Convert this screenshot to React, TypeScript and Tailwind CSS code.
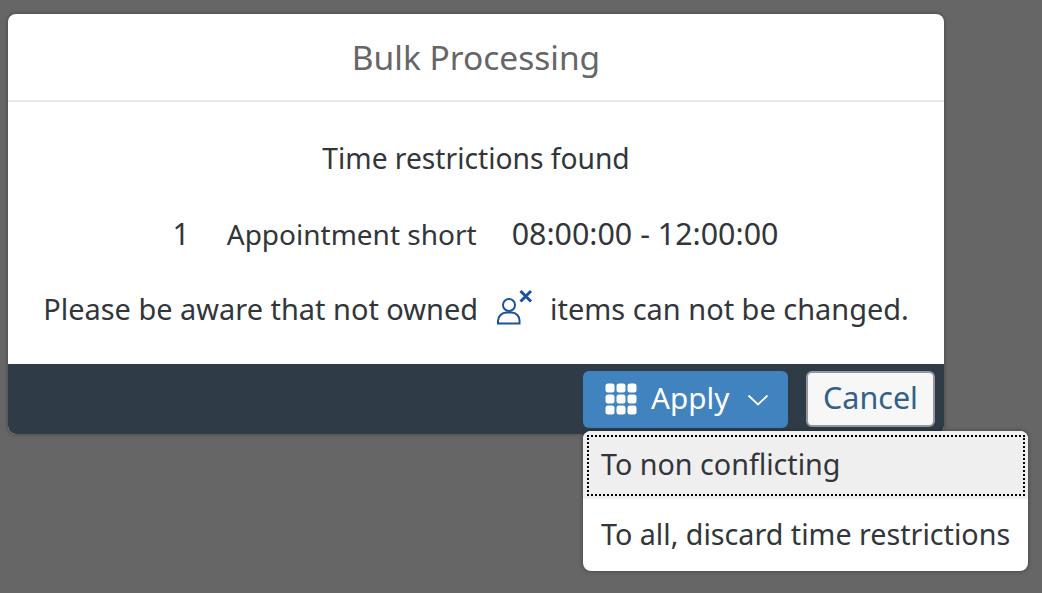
import React from "react"

const font = "font-['Noto_Sans','Open_Sans',sans-serif]"

const GridIcon = () => (
  <svg width="32" height="32" viewBox="0 0 32 32" fill="white">
    {[0.5, 11.5, 22.5].flatMap((y) =>
      [0.5, 11.5, 22.5].map((x) => <rect key={`${x}-${y}`} x={x} y={y} width="9" height="9" rx="2.5" />)
    )}
  </svg>
)

const NotOwnedIcon = () => (
  <svg width="38" height="38" viewBox="0 0 38 38" fill="none" stroke="#1d4f9c" className="ml-[18px] mr-[16px] -mt-[2px]">
    <circle cx="13" cy="16" r="6" strokeWidth="2" />
    <path d="M2 34.5v-2.5a8.5 8.5 0 0 1 8.5-8.5h5a8 8 0 0 1 8 8.5v2.5z" strokeWidth="2" />
    <path d="M24.5 2l10.5 10.5M35 2L24.5 12.5" strokeWidth="3" />
  </svg>
)

const Chevron = () => (
  <svg width="22" height="12" viewBox="0 0 22 12" fill="none" stroke="white" strokeWidth="1.8">
    <path d="M1.5 1.5L11 10.5L20.5 1.5" />
  </svg>
)

export default function App() {
  return (
    <div className={`relative h-[593px] w-[1042px] overflow-hidden bg-[#666666] pt-[14px] pl-2 ${font}`}>
      <div className="w-[936px] h-[420px] rounded-lg overflow-hidden bg-white flex flex-col shadow-[0_0_4px_rgba(0,0,0,0.35)]">
        <div className="h-[88px] shrink-0 border-b-2 border-[#e9e9e9] flex items-center justify-center text-[33.5px] text-[#666666]">
          <span className="mt-[1px]">Bulk Processing</span>
        </div>
        <div className="flex-1 flex flex-col items-center text-[28px] text-[#32363a]">
          <div className="mt-[36px] h-[40px] leading-[40px] text-[28.2px]">Time restrictions found</div>
          <div className="mt-[36px] h-[40px] leading-[40px] flex gap-[35px] pr-[1px]">
            <span className="text-[30px] pr-[2px]">1</span>
            <span>Appointment short</span>
            <span className="text-[30.4px]">08:00:00 - 12:00:00</span>
          </div>
          <div className="mt-[35px] h-[40px] flex items-center text-[28.95px]">
            <span>Please be aware that not owned</span>
            <NotOwnedIcon />
            <span>items can not be changed.</span>
          </div>
        </div>
        <div className="h-[70px] shrink-0 bg-[#2f3c48] flex items-center justify-end pr-[9px] gap-[18px]">
          <button className="w-[205px] h-[57px] rounded-md bg-[#4083bf] text-white text-[29.7px] flex items-center pl-[22px] gap-[14px]">
            <GridIcon />
            <span className="-mt-[2px]">Apply</span>
            <span className="ml-[4px] mt-[2px]"><Chevron /></span>
          </button>
          <button className="w-[129px] h-[56px] rounded-md bg-[#f7f7f7] border-2 border-[#93979b] text-[#346187] text-[30.5px]">
            <span className="relative -top-px">Cancel</span>
          </button>
        </div>
      </div>
      <div className="absolute left-[583px] top-[431px] w-[445px] h-[140px] rounded-lg overflow-hidden bg-white text-[28.7px] text-[#32363a] shadow-[0_0_4px_rgba(0,0,0,0.4)]">
        <div className="h-[68px] bg-[#efefef] pt-[4px] pb-[3px] pl-[4px] pr-[3px]">
          <div className="h-full border-2 border-dotted border-black flex items-center pl-[12px]">
            <span className="-mt-[3px]">To non conflicting</span>
          </div>
        </div>
        <div className="h-[72px] flex items-center pl-[18px]">
          <span className="-mt-[3px]">To all, discard time restrictions</span>
        </div>
      </div>
    </div>
  )
}
